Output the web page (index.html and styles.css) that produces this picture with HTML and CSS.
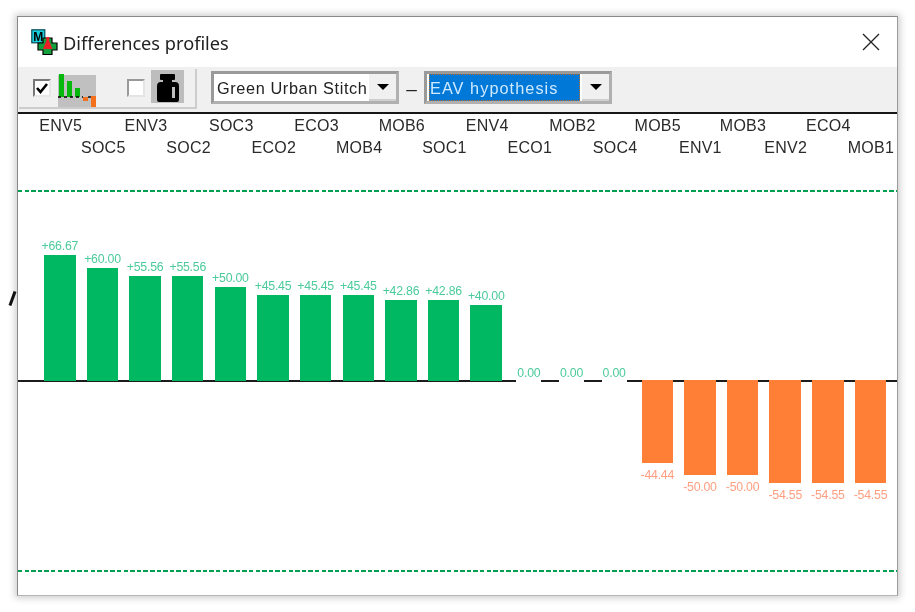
FILE: index.html
```html
<!DOCTYPE html>
<html lang="en">
<head>
<meta charset="utf-8">
<title>Differences profiles</title>
<link rel="stylesheet" href="styles.css">
</head>
<body>
<div class="stray"></div>
<main class="window">
  <header class="titlebar">
    <svg class="app-icon" width="27" height="26" viewBox="0 0 27 26">
      <rect x=".8" y=".8" width="13" height="13" fill="#18d0dc" stroke="#0a4a55" stroke-width="1.2"/>
      <text x="7.3" y="12" text-anchor="middle" class="app-icon-m">M</text>
      <path d="M12 9h9v5h5v7h-5v4.500h-9V21H7v-7h5z" fill="#12a03c" stroke="#000" stroke-width="1.2"/>
      <path d="M15.300 8h2.900v4l3.300 8h-9.500l3.300-8z" fill="#ea1f28"/>
    </svg>
    <h1 class="title">Differences profiles</h1>
    <svg class="close" width="18" height="18" viewBox="0 0 18 18">
      <path d="M1 1l16 16M17 1L1 17" stroke="#222" stroke-width="1.3" fill="none"/>
    </svg>
  </header>

  <div class="toolbar">
    <div class="toolgroup">
      <span class="check">
        <svg width="14" height="12" viewBox="0 0 14 12"><path d="M2 6l3.500 4L12 2" stroke="#000" stroke-width="2.6" fill="none"/></svg>
      </span>
      <svg class="chart-icon" width="38" height="33" viewBox="0 0 38 33">
        <rect y="1" width="38" height="32" fill="#c0c0c0"/>
        <path d="M1 0h5v23H1zM9 7h5v16H9zM17 14h5v9h-5z" fill="#06b80e"/>
        <path d="M0 23h25" stroke="#000" stroke-width="1.4" stroke-dasharray="3 3"/>
        <path d="M25 23h5v4h-5zM33 22h5v11h-5z" fill="#f4701c"/>
        <path d="M30 23h3" stroke="#000" stroke-width="1.4"/>
      </svg>
      <span class="check check-off"></span>
      <svg class="weight-icon" width="33" height="33" viewBox="0 0 33 33">
        <rect width="33" height="33" fill="#bdbdbd"/>
        <path d="M9 5q0-1 1-1h13q1 0 1 1v4q0 1-1 1h-2v2h3q4 0 4 4v14q0 2-2 2H8q-2 0-2-2V16q0-4 4-4h2v-2h-2q-1 0-1-1z" fill="#000"/>
        <rect x="21" y="17" width="3" height="11" fill="#bdbdbd"/>
      </svg>
    </div>
    <div class="selects">
      <div class="combo">
        <span class="combo-value">Green Urban Stitch</span>
        <span class="combo-btn"><i class="arrow"></i></span>
      </div>
      <span class="dash">–</span>
      <div class="combo">
        <span class="combo-value combo-selected">EAV hypothesis</span>
        <span class="combo-btn"><i class="arrow"></i></span>
      </div>
    </div>
  </div>

  <section class="chart">
    <div class="names">
      <div class="name-row">
        <span class="name">ENV5</span><span class="name">ENV3</span><span class="name">SOC3</span><span class="name">ECO3</span><span class="name">MOB6</span>
        <span class="name">ENV4</span><span class="name">MOB2</span><span class="name">MOB5</span><span class="name">MOB3</span><span class="name">ECO4</span>
      </div>
      <div class="name-row name-row-alt">
        <span class="name">SOC5</span><span class="name">SOC2</span><span class="name">ECO2</span><span class="name">MOB4</span><span class="name">SOC1</span>
        <span class="name">ECO1</span><span class="name">SOC4</span><span class="name">ENV1</span><span class="name">ENV2</span><span class="name">MOB1</span>
      </div>
    </div>
    <div class="plot">
      <div class="half half-up">
        <div class="cell"><span class="val">+66.67</span><div class="bar" style="--v:66.67"></div></div>
        <div class="cell"><span class="val">+60.00</span><div class="bar" style="--v:60"></div></div>
        <div class="cell"><span class="val">+55.56</span><div class="bar" style="--v:55.56"></div></div>
        <div class="cell"><span class="val">+55.56</span><div class="bar" style="--v:55.56"></div></div>
        <div class="cell"><span class="val">+50.00</span><div class="bar" style="--v:50"></div></div>
        <div class="cell"><span class="val">+45.45</span><div class="bar" style="--v:45.45"></div></div>
        <div class="cell"><span class="val">+45.45</span><div class="bar" style="--v:45.45"></div></div>
        <div class="cell"><span class="val">+45.45</span><div class="bar" style="--v:45.45"></div></div>
        <div class="cell"><span class="val">+42.86</span><div class="bar" style="--v:42.86"></div></div>
        <div class="cell"><span class="val">+42.86</span><div class="bar" style="--v:42.86"></div></div>
        <div class="cell"><span class="val">+40.00</span><div class="bar" style="--v:40"></div></div>
        <div class="cell"><span class="val val-zero">0.00</span></div>
        <div class="cell"><span class="val val-zero">0.00</span></div>
        <div class="cell"><span class="val val-zero">0.00</span></div>
      </div>
      <div class="half half-down">
        <div class="cell cell-neg"><div class="bar bar-neg" style="--v:43.8"></div><span class="val val-neg">-44.44</span></div>
        <div class="cell cell-neg"><div class="bar bar-neg" style="--v:50"></div><span class="val val-neg">-50.00</span></div>
        <div class="cell cell-neg"><div class="bar bar-neg" style="--v:50"></div><span class="val val-neg">-50.00</span></div>
        <div class="cell cell-neg"><div class="bar bar-neg" style="--v:54.55"></div><span class="val val-neg">-54.55</span></div>
        <div class="cell cell-neg"><div class="bar bar-neg" style="--v:54.55"></div><span class="val val-neg">-54.55</span></div>
        <div class="cell cell-neg"><div class="bar bar-neg" style="--v:54.55"></div><span class="val val-neg">-54.55</span></div>
      </div>
    </div>
  </section>
</main>
</body>
</html>
```
FILE: styles.css
```css
* { box-sizing: border-box; }
html, body { margin: 0; height: 100%; }
body {
  width: 915px;
  height: 612px;
  overflow: hidden;
  background: #fff;
  padding: 16px 0 0 17px;
  font-family: "Liberation Sans", Arial, sans-serif;
  color: #1c1c1c;
  position: relative;
}
.stray {
  position: absolute;
  left: 11px;
  top: 291px;
  width: 3px;
  height: 15px;
  background: #111;
  transform: rotate(20deg);
  filter: blur(.5px);
}
.window {
  width: 881px;
  height: 580px;
  background: #fff;
  border: 1px solid #8a8a8a;
  border-right-color: #9a9a9a;
  border-bottom-color: #b5b5b5;
  box-shadow: 0 0 7px 2px rgba(0,0,0,.2);
  display: flex;
  flex-direction: column;
  filter: blur(.45px);
}

/* title bar */
.titlebar {
  height: 50px;
  flex: none;
  display: flex;
  align-items: center;
  padding: 0 17px 0 13px;
}
.app-icon { flex: none; }
.app-icon-m { font: bold 12px "Liberation Sans", sans-serif; fill: #000; }
.title {
  margin: 2px 0 0 5px;
  font: 400 18.2px "Noto Sans", "Open Sans", sans-serif;
  color: #222;
  flex: 1;
}
.close { flex: none; margin-top: -1px; }

/* toolbar */
.toolbar {
  height: 47px;
  flex: none;
  display: flex;
  background: #f0f0f0;
  border-bottom: 2px solid #161616;
  padding: 2px 0 3px 1px;
}
.toolgroup {
  width: 178px;
  display: flex;
  align-items: center;
  padding: 0 0 0 14px;
  border-right: 2px solid #cdcdcd;
  border-bottom: 2px solid #cdcdcd;
}
.check {
  width: 18px;
  height: 18px;
  flex: none;
  background: #fff;
  border: 2px solid;
  border-color: #777 #e8e8e8 #e8e8e8 #777;
  display: flex;
  align-items: center;
  justify-content: center;
  margin-top: -1px;
}
.check-off { margin-left: 31px; border-color: #999 #e4e4e4 #e4e4e4 #999; }
.chart-icon { margin: 4px 0 0 7px; flex: none; }
.weight-icon { margin: -4px 0 0 6px; flex: none; }
.selects {
  display: flex;
  align-items: flex-start;
  padding: 2px 0 0 14px;
}
.combo {
  width: 188px;
  height: 33px;
  display: flex;
  align-items: center;
  border: 3px solid;
  border-color: #9a9a9a #b0b0b0 #b0b0b0 #9a9a9a;
  background: #fff;
  padding-left: 3px;
}
.combo-value {
  flex: 1;
  font-size: 16.3px;
  line-height: 29px;
  padding-top: 1px;
  letter-spacing: .62px;
  white-space: nowrap;
  align-self: stretch;
  display: flex;
  align-items: center;
  color: #222;
}
.combo-selected {
  background: #0078d7;
  color: #cfe9ff;
  border: 1px dotted #b96a20;
  margin: 0 2px 0 -1px;
  padding-left: 0;
  letter-spacing: 1.05px;
}
.combo-btn {
  width: 27px;
  align-self: stretch;
  flex: none;
  background: #f0f0f0;
  border-bottom: 2px solid #cfcfcf;
  display: flex;
  align-items: center;
  justify-content: center;
}
.arrow {
  width: 0;
  height: 0;
  border: 6px solid transparent;
  border-top: 6px solid #000;
  border-bottom: 0;
}
.dash { width: 25px; text-align: center; font-size: 19px; line-height: 35px; color: #222; }

/* chart */
.chart { flex: 1; display: flex; flex-direction: column; }
.names {
  height: 76px;
  flex: none;
  padding-top: 1px;
}
.name-row { display: flex; height: 22px; padding-left: 0; }
.name-row-alt { padding-left: 42.65px; }
.name {
  flex: none;
  width: 85.3px;
  text-align: center;
  font-size: 16px;
  line-height: 22px;
  letter-spacing: .25px;
  color: #2a2a2a;
  white-space: nowrap;
}

.plot {
  height: 382px;
  flex: none;
  position: relative;
  display: flex;
  flex-direction: column;
  background:
    repeating-linear-gradient(90deg, #00a050 0 4.5px, transparent 4.5px 6.6px) top / 100% 2px no-repeat,
    repeating-linear-gradient(90deg, #00a050 0 4.5px, transparent 4.5px 6.6px) bottom / 100% 2px no-repeat;
}
.half {
  display: grid;
  grid-template-columns: repeat(20, 42.65px);
  padding-left: 20.5px;
}
.half-up { border-bottom: 2px solid #1c1c1c; height: 192px; }
.half-down { grid-template-columns: repeat(6, 42.65px); padding-left: 618px; height: 190px; }
.cell {
  display: flex;
  flex-direction: column;
  align-items: center;
  justify-content: flex-end;
}
.cell-neg { justify-content: flex-start; margin-top: -2px; }
.bar {
  width: 31.5px;
  height: calc(var(--v) * 1.89px);
  background: #00b862;
  margin-bottom: -1px;
  flex: none;
}
.bar-neg { background: #ff7f37; margin: 0; }
.val {
  font-size: 12.3px;
  line-height: 14px;
  letter-spacing: -.22px;
  color: #4ccb9c;
  white-space: nowrap;
  margin-bottom: 2px;
}
.val-zero {
  background: #fff;
  padding: 0 1px 2px;
  margin-bottom: -2px;
  position: relative;
}
.val-neg { color: #ff9f80; margin: 5px 0 0; }
```
